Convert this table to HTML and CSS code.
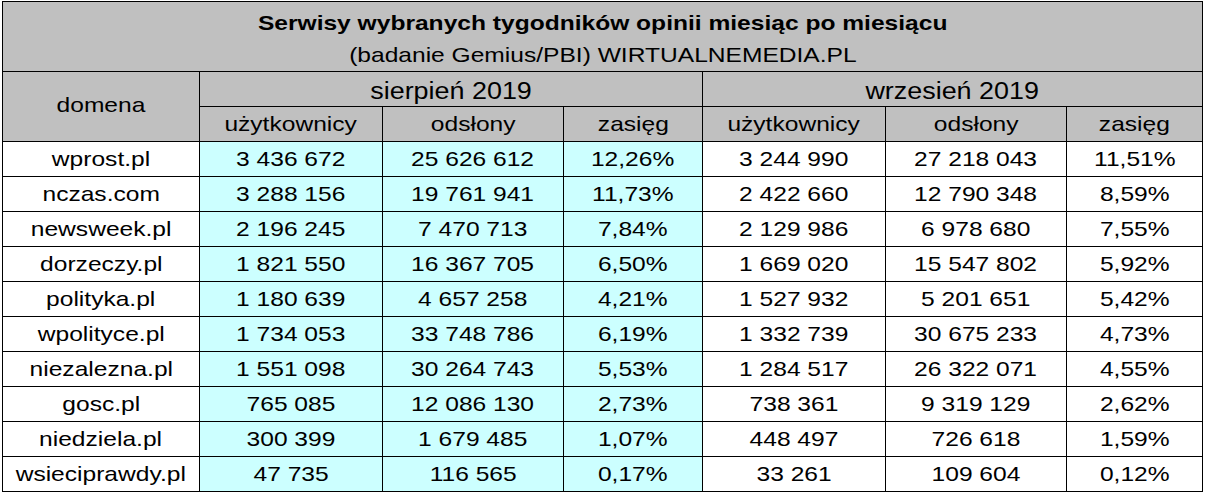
FILE: index.html
```html
<!DOCTYPE html>
<html lang="pl">
<head>
<meta charset="utf-8">
<title>Serwisy wybranych tygodników opinii</title>
<link rel="stylesheet" href="styles.css">
</head>
<body>
<div class="sheet">
  <div class="title">
    <div class="t-main"><span>Serwisy wybranych tygodników opinii miesiąc po miesiącu</span></div>
    <div class="t-sub"><span>(badanie Gemius/PBI) WIRTUALNEMEDIA.PL</span></div>
  </div>

  <div class="hd domain-hd"><span>domena</span></div>
  <div class="hd month m1"><span>sierpień 2019</span></div>
  <div class="hd month m2"><span>wrzesień 2019</span></div>

  <div class="hd sub"><span>użytkownicy</span></div>
  <div class="hd sub"><span>odsłony</span></div>
  <div class="hd sub"><span>zasięg</span></div>
  <div class="hd sub"><span>użytkownicy</span></div>
  <div class="hd sub"><span>odsłony</span></div>
  <div class="hd sub"><span>zasięg</span></div>

  <div class="c"><span>wprost.pl</span></div>
  <div class="c hi"><span>3 436 672</span></div><div class="c hi"><span>25 626 612</span></div><div class="c hi"><span>12,26%</span></div>
  <div class="c"><span>3 244 990</span></div><div class="c"><span>27 218 043</span></div><div class="c"><span>11,51%</span></div>

  <div class="c"><span>nczas.com</span></div>
  <div class="c hi"><span>3 288 156</span></div><div class="c hi"><span>19 761 941</span></div><div class="c hi"><span>11,73%</span></div>
  <div class="c"><span>2 422 660</span></div><div class="c"><span>12 790 348</span></div><div class="c"><span>8,59%</span></div>

  <div class="c"><span>newsweek.pl</span></div>
  <div class="c hi"><span>2 196 245</span></div><div class="c hi"><span>7 470 713</span></div><div class="c hi"><span>7,84%</span></div>
  <div class="c"><span>2 129 986</span></div><div class="c"><span>6 978 680</span></div><div class="c"><span>7,55%</span></div>

  <div class="c"><span>dorzeczy.pl</span></div>
  <div class="c hi"><span>1 821 550</span></div><div class="c hi"><span>16 367 705</span></div><div class="c hi"><span>6,50%</span></div>
  <div class="c"><span>1 669 020</span></div><div class="c"><span>15 547 802</span></div><div class="c"><span>5,92%</span></div>

  <div class="c"><span>polityka.pl</span></div>
  <div class="c hi"><span>1 180 639</span></div><div class="c hi"><span>4 657 258</span></div><div class="c hi"><span>4,21%</span></div>
  <div class="c"><span>1 527 932</span></div><div class="c"><span>5 201 651</span></div><div class="c"><span>5,42%</span></div>

  <div class="c"><span>wpolityce.pl</span></div>
  <div class="c hi"><span>1 734 053</span></div><div class="c hi"><span>33 748 786</span></div><div class="c hi"><span>6,19%</span></div>
  <div class="c"><span>1 332 739</span></div><div class="c"><span>30 675 233</span></div><div class="c"><span>4,73%</span></div>

  <div class="c"><span>niezalezna.pl</span></div>
  <div class="c hi"><span>1 551 098</span></div><div class="c hi"><span>30 264 743</span></div><div class="c hi"><span>5,53%</span></div>
  <div class="c"><span>1 284 517</span></div><div class="c"><span>26 322 071</span></div><div class="c"><span>4,55%</span></div>

  <div class="c"><span>gosc.pl</span></div>
  <div class="c hi"><span>765 085</span></div><div class="c hi"><span>12 086 130</span></div><div class="c hi"><span>2,73%</span></div>
  <div class="c"><span>738 361</span></div><div class="c"><span>9 319 129</span></div><div class="c"><span>2,62%</span></div>

  <div class="c"><span>niedziela.pl</span></div>
  <div class="c hi"><span>300 399</span></div><div class="c hi"><span>1 679 485</span></div><div class="c hi"><span>1,07%</span></div>
  <div class="c"><span>448 497</span></div><div class="c"><span>726 618</span></div><div class="c"><span>1,59%</span></div>

  <div class="c"><span>wsieciprawdy.pl</span></div>
  <div class="c hi"><span>47 735</span></div><div class="c hi"><span>116 565</span></div><div class="c hi"><span>0,17%</span></div>
  <div class="c"><span>33 261</span></div><div class="c"><span>109 604</span></div><div class="c"><span>0,12%</span></div>
</div>
</body>
</html>
```

FILE: styles.css
```css
html, body {
  margin: 0;
  padding: 0;
  background: #ffffff;
}

body {
  font-family: "Liberation Sans", Arial, sans-serif;
  color: #000;
}

.sheet {
  display: grid;
  width: max-content;
  margin: 1px 0 0 2px;
  padding: 1px;
  gap: 1px;
  background: #000;
  grid-template-columns: 196px 182px 180px 138px 182px 180px 135px;
  grid-template-rows: 69px 34px 34px repeat(10, 34px);
}

.sheet span {
  display: inline-block;
  transform: scaleX(1.17);
  white-space: nowrap;
}

.title {
  grid-column: 1 / -1;
  background: #c0c0c0;
  text-align: center;
  font-size: 21px;
  line-height: 32px;
  padding-top: 5px;
  box-sizing: border-box;
}

.t-main {
  font-weight: bold;
}

.hd {
  background: #c0c0c0;
  text-align: center;
  font-size: 21px;
  line-height: 34px;
}

.domain-hd {
  grid-row: 2 / 4;
  padding-top: 16px;
  box-sizing: border-box;
}

.month {
  font-size: 23px;
  line-height: 28px;
  padding-top: 5px;
  box-sizing: border-box;
}

.m1 { grid-column: 2 / 5; }
.m2 { grid-column: 5 / 8; }

.c {
  background: #ffffff;
  text-align: center;
  font-size: 21px;
  line-height: 34px;
}

.c.hi {
  background: #ccffff;
}
```
